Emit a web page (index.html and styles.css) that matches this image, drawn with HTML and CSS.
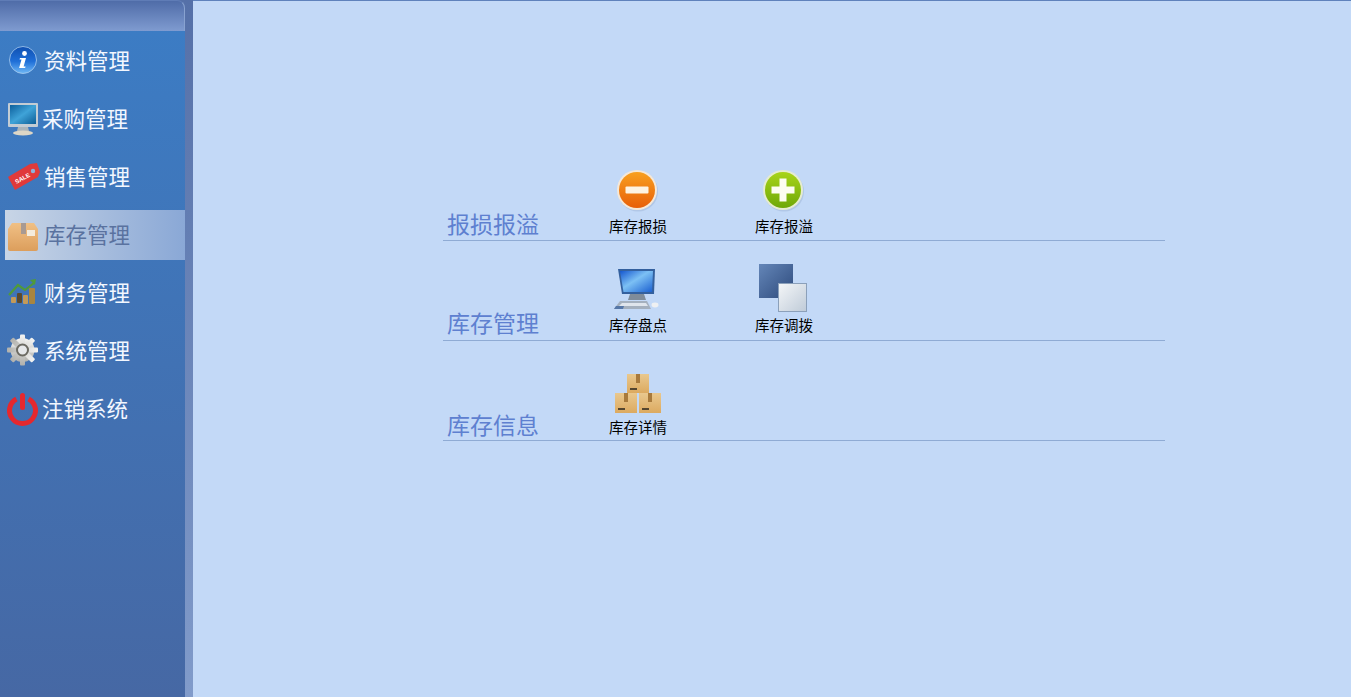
FILE: index.html
```html
<!DOCTYPE html>
<html>
<head>
    <meta charset="UTF-8">
    <link rel="stylesheet" href="styles.css">
</head>
<body>
    <div class="sidebar">
        <div class="sidebar-head"></div>
        <ul class="nav">
            <li class="nav-item">
                <svg class="nav-icon" width="36" height="36" viewBox="0 0 36 36">
                    <defs><linearGradient id="gInfo" x1="0" y1="0" x2="0" y2="1"><stop offset="0" stop-color="#0f4fb0"/><stop offset="0.55" stop-color="#1f6fd8"/><stop offset="1" stop-color="#6fb8f5"/></linearGradient></defs>
                    <circle cx="18" cy="18" r="13.5" fill="url(#gInfo)" stroke="#a9cdf0" stroke-width="0.8"/>
                    <circle cx="19.5" cy="11.5" r="2.4" fill="#fff"/>
                    <path d="M15 16h6l-2.4 8.5h2l-.5 1.5h-6l2.4-8.5h-2z" fill="#fff"/>
                </svg>
                <span>资料管理</span>
            </li>
            <li class="nav-item nav-item-tight">
                <svg class="nav-icon" width="34" height="36" viewBox="-1 0 34 36">
                    <defs><linearGradient id="gScreen" x1="0" y1="0" x2="1" y2="1"><stop offset="0" stop-color="#0c5f9c"/><stop offset="0.5" stop-color="#3fa3d8"/><stop offset="1" stop-color="#0d5d96"/></linearGradient></defs>
                    <rect x="3" y="3" width="30" height="24" rx="1" fill="#c3ccd4"/>
                    <rect x="5" y="5" width="26" height="19" fill="url(#gScreen)"/>
                    <path d="M13 27h10l1 4h-12z" fill="#aab4ba"/>
                    <ellipse cx="18" cy="33" rx="10" ry="2.6" fill="#ddd6c6"/>
                </svg>
                <span>采购管理</span>
            </li>
            <li class="nav-item">
                <svg class="nav-icon" width="36" height="36" viewBox="0 0 36 36">
                    <path d="M3 19L25 6l7-1 3 9-2 5-23 13z" fill="#e03a3a"/>
                    <circle cx="28" cy="13" r="2.2" fill="#8db2dc"/>
                    <text x="17" y="22" class="sale-text" text-anchor="middle" transform="rotate(-29 18 19)">SALE</text>
                </svg>
                <span>销售管理</span>
            </li>
            <li class="nav-item nav-item-active">
                <svg class="nav-icon" width="36" height="36" viewBox="0 0 36 36">
                    <defs><linearGradient id="gBox" x1="0" y1="0" x2="0" y2="1"><stop offset="0" stop-color="#f0c085"/><stop offset="1" stop-color="#dc9e5c"/></linearGradient></defs>
                    <path d="M7 6h22l4 6v20a2 2 0 0 1-2 2H5a2 2 0 0 1-2-2V12z" fill="url(#gBox)"/>
                    <rect x="16" y="6" width="5" height="11" fill="#a89a92"/>
                    <rect x="22" y="13" width="8" height="6" fill="#f4ecdd"/>
                </svg>
                <span>库存管理</span>
            </li>
            <li class="nav-item">
                <svg class="nav-icon" width="36" height="36" viewBox="0 0 36 36">
                    <path d="M4 21l9-10 7 5 9-7" fill="none" stroke="#4f9a3a" stroke-width="2.2"/>
                    <path d="M25 6l6-1-1 6z" fill="#4f9a3a"/>
                    <rect x="6" y="23" width="5" height="6" rx="1" fill="#c39a58"/>
                    <rect x="12" y="19" width="5" height="10" rx="1" fill="#5b4a2e"/>
                    <rect x="18" y="21" width="5" height="9" rx="1" fill="#c39a58"/>
                    <rect x="24" y="14" width="6" height="16" rx="1" fill="#a8853f"/>
                </svg>
                <span>财务管理</span>
            </li>
            <li class="nav-item">
                <svg class="nav-icon" width="36" height="36" viewBox="0 0 36 36">
                    <defs><linearGradient id="gGear" x1="0" y1="0" x2="0" y2="1"><stop offset="0" stop-color="#f4f4f2"/><stop offset="1" stop-color="#b0b0ac"/></linearGradient></defs>
                    <g fill="url(#gGear)">
                        <circle cx="17.5" cy="18" r="12"/>
                        <rect x="15" y="2.5" width="5" height="31" rx="1"/>
                        <rect x="15" y="2.5" width="5" height="31" rx="1" transform="rotate(45 17.5 18)"/>
                        <rect x="15" y="2.5" width="5" height="31" rx="1" transform="rotate(90 17.5 18)"/>
                        <rect x="15" y="2.5" width="5" height="31" rx="1" transform="rotate(135 17.5 18)"/>
                    </g>
                    <circle cx="17.5" cy="18" r="5.5" fill="#e6e8ea" stroke="#6b6a62" stroke-width="2"/>
                </svg>
                <span>系统管理</span>
            </li>
            <li class="nav-item nav-item-tight">
                <svg class="nav-icon" width="34" height="36" viewBox="0 0 34 36">
                    <path d="M12.4 9A13 13 0 1 0 24.6 9" fill="none" stroke="#e5282e" stroke-width="5"/>
                    <rect x="16" y="3" width="5" height="17" rx="2.5" fill="#e5282e"/>
                </svg>
                <span>注销系统</span>
            </li>
        </ul>
    </div>
    <div class="strip"></div>
    <div class="main">
        <div class="panel">
            <div class="group">
                <div class="group-title">报损报溢</div>
                <div class="tool">
                    <svg width="44" height="44" viewBox="0 0 44 44">
                        <defs><linearGradient id="gOrange" x1="0" y1="0" x2="0" y2="1"><stop offset="0" stop-color="#f8a020"/><stop offset="1" stop-color="#e85f08"/></linearGradient></defs>
                        <circle cx="22" cy="22.5" r="20" fill="#9fb6d8" opacity=".5"/>
                        <circle cx="21" cy="21" r="20" fill="#f5e8d8"/>
                        <circle cx="21" cy="21" r="18" fill="url(#gOrange)"/>
                        <rect x="9.500" y="17.500" width="23" height="7" rx="1" fill="#fdf3e2"/>
                    </svg>
                    <span class="tool-label">库存报损</span>
                </div>
                <div class="tool">
                    <svg width="44" height="44" viewBox="0 0 44 44">
                        <defs><linearGradient id="gGreen" x1="0" y1="0" x2="0" y2="1"><stop offset="0" stop-color="#a8d41a"/><stop offset="1" stop-color="#6fa808"/></linearGradient></defs>
                        <circle cx="22" cy="22.5" r="20" fill="#9fb6d8" opacity=".5"/>
                        <circle cx="21" cy="21" r="20" fill="#e6ecd0"/>
                        <circle cx="21" cy="21" r="18" fill="url(#gGreen)"/>
                        <path d="M17.500 9.500h7v8h8v7h-8v8h-7v-8h-8v-7h8z" fill="#fdfdf0"/>
                    </svg>
                    <span class="tool-label">库存报溢</span>
                </div>
            </div>
            <div class="group group-mid">
                <div class="group-title">库存管理</div>
                <div class="tool">
                    <svg width="48" height="46" viewBox="0 0 48 46">
                        <defs><linearGradient id="gPc" x1="0" y1="0" x2="1" y2="1"><stop offset="0" stop-color="#1557cf"/><stop offset="0.45" stop-color="#7cc0f4"/><stop offset="1" stop-color="#1a5fd0"/></linearGradient></defs>
                        <path d="M4 3h37l-1 25H8z" fill="#33609e"/>
                        <path d="M6 5h33l-1 21H9.500z" fill="url(#gPc)"/>
                        <path d="M16 28h14l2 6H14z" fill="#7f8c9a"/>
                        <path d="M0 43l6-8h27l4 8z" fill="#a4b0be"/>
                        <path d="M0 43l2-3h8l-1 3z" fill="#5577a8"/>
                        <path d="M5 40l3-3h24l2 3z" fill="#dfe5ec"/>
                        <ellipse cx="41" cy="39" rx="3.500" ry="2.400" fill="#eef0f2"/>
                    </svg>
                    <span class="tool-label">库存盘点</span>
                </div>
                <div class="tool">
                    <svg width="50" height="48" viewBox="0 0 50 48">
                        <defs>
                            <linearGradient id="gBack" x1="0" y1="0" x2="1" y2="1"><stop offset="0" stop-color="#6486b8"/><stop offset="1" stop-color="#2d4a7c"/></linearGradient>
                            <linearGradient id="gFront" x1="0" y1="0" x2="1" y2="1"><stop offset="0" stop-color="#f4f6f8"/><stop offset="1" stop-color="#bfcbd8"/></linearGradient>
                        </defs>
                        <rect x="0" y="0" width="34" height="34" fill="url(#gBack)"/>
                        <rect x="19.500" y="19.500" width="28" height="28" fill="url(#gFront)" stroke="#8ba0ba"/>
                    </svg>
                    <span class="tool-label">库存调拨</span>
                </div>
            </div>
            <div class="group group-low">
                <div class="group-title">库存信息</div>
                <div class="tool">
                    <svg width="48" height="40" viewBox="0 0 48 40">
                        <defs><linearGradient id="gCarton" x1="0" y1="0" x2="0" y2="1"><stop offset="0" stop-color="#e9c88e"/><stop offset="1" stop-color="#dcaa60"/></linearGradient></defs>
                        <rect x="13" y="0" width="22" height="19" fill="url(#gCarton)"/>
                        <rect x="22" y="0" width="4" height="9" fill="#a87a3c"/>
                        <rect x="16" y="14" width="7" height="2" fill="#55462f"/>
                        <rect x="1" y="19" width="22" height="20" fill="url(#gCarton)"/>
                        <rect x="10" y="19" width="4" height="9" fill="#a87a3c"/>
                        <rect x="4" y="34" width="7" height="2" fill="#55462f"/>
                        <rect x="25" y="19" width="22" height="20" fill="url(#gCarton)"/>
                        <rect x="34" y="19" width="4" height="9" fill="#a87a3c"/>
                        <rect x="28" y="34" width="7" height="2" fill="#55462f"/>
                    </svg>
                    <span class="tool-label">库存详情</span>
                </div>
            </div>
        </div>
    </div>
</body>
</html>
```

FILE: styles.css
```css
* {
    box-sizing: border-box;
}

html, body {
    height: 100%;
}

body {
    margin: 0;
    display: flex;
    overflow: hidden;
    background: #c3d9f7;
    font-family: "Liberation Sans", "Noto Sans CJK SC", sans-serif;
}

.sidebar {
    width: 185px;
    flex-shrink: 0;
    background: linear-gradient(to bottom, #5570a8 31px, #3c7cc4 31px, #4668a4 100%);
}

.sidebar-head {
    height: 31px;
    border-top: 1px solid #5f7cb6;
    border-right: 1px solid #88a2d0;
    border-top-right-radius: 8px;
    background: linear-gradient(to bottom, #4f6ca8, #7f9bd0);
}

.nav {
    list-style: none;
    margin: 0;
    padding: 0;
}

.nav-item {
    display: flex;
    align-items: center;
    gap: 3px;
    height: 58px;
    padding-left: 5px;
    color: #f2f7ff;
    font-size: 21.5px;
}

.nav-item span {
    padding-bottom: 2px;
}

.nav-item-tight {
    gap: 4px;
    padding-left: 4px;
}

.nav-item-active {
    height: 50px;
    margin: 5px 0 3px 5px;
    padding-left: 0;
    color: #5a729f;
    background: linear-gradient(to right, #c8d5e6, #8aa8d6);
}

.nav-item-active span {
    padding-bottom: 4px;
}

.nav-icon {
    flex-shrink: 0;
}

.sale-text {
    fill: #fff;
    font-size: 6px;
    font-weight: bold;
}

.strip {
    width: 8px;
    flex-shrink: 0;
    background: linear-gradient(to bottom, #5570a8, #819bca);
}

.main {
    flex: 1;
    padding: 140px 0 0 250px;
    border-top: 1px solid #5f82bc;
}

.panel {
    width: 722px;
}

.group {
    display: flex;
    align-items: flex-end;
    height: 100px;
    padding-bottom: 3px;
    border-bottom: 1px solid #8fabd4;
}

.group-mid {
    padding-bottom: 4px;
}

.group-low {
    padding-bottom: 2px;
}

.group-title {
    width: 122px;
    margin-bottom: 1px;
    padding-left: 4px;
    color: #5e80d0;
    font-size: 23px;
    line-height: 22px;
}

.tool {
    display: flex;
    flex-direction: column;
    align-items: center;
    width: 146px;
}

.tool-label {
    margin-top: 4px;
    color: #000;
    font-size: 14.5px;
    line-height: 20px;
}
```
